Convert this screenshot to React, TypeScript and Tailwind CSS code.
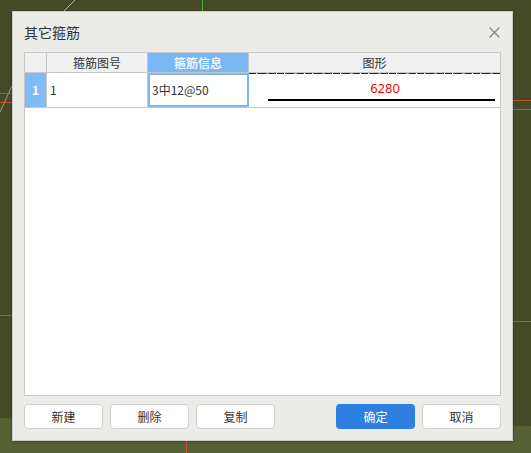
const CanvasBackdrop = () => (
    <svg className="absolute inset-0" width="531" height="453" viewBox="0 0 531 453">
        <rect x="0" y="0" width="531" height="453" fill="#444a28" />
        <polygon points="0,418 531,426 531,453 0,453" fill="#556033" />
        {/* cad lines behind the dialog */}
        <line x1="75" y1="0" x2="64" y2="11" stroke="#b9bcb0" strokeWidth="1" />
        <line x1="12" y1="86" x2="0" y2="112" stroke="#9a9e90" strokeWidth="1" />
        <line x1="202.5" y1="0" x2="202.5" y2="11" stroke="#3fae3a" strokeWidth="1" />
        <line x1="0" y1="93.5" x2="12" y2="93.5" stroke="#c0552a" strokeWidth="1" />
        <line x1="0" y1="102.5" x2="12" y2="102.5" stroke="#c0552a" strokeWidth="1" />
        <line x1="513" y1="100.5" x2="531" y2="100.5" stroke="#c0552a" strokeWidth="1" />
        <line x1="513" y1="109.5" x2="531" y2="109.5" stroke="#c0552a" strokeWidth="1" />
        <line x1="0" y1="315.5" x2="12" y2="315.5" stroke="#c0552a" strokeWidth="1" />
        <line x1="513" y1="321.5" x2="531" y2="321.5" stroke="#c0552a" strokeWidth="1" />
        <line x1="186.5" y1="441" x2="186.5" y2="453" stroke="#c0552a" strokeWidth="1" />
    </svg>
);

const CloseIcon = () => (
    <svg width="11" height="11" viewBox="0 0 11 11" className="mr-[1px]">
        <path d="M0.5 0.5 L10.5 10.5 M10.5 0.5 L0.5 10.5" stroke="#8a8a8a" strokeWidth="1.3" fill="none" />
    </svg>
);

const FooterButton = ({ label, primary }: { label: string; primary?: boolean }) => (
    <button
        className={
            primary
                ? "h-[25px] w-[79px] rounded-[4px] bg-[#2d7fe0] text-[12px] text-white"
                : "h-[25px] w-[79px] rounded-[4px] border border-[#cfcfcf] bg-white text-[12px] text-[#333]"
        }
    >
        {label}
    </button>
);

export default function App() {
    return (
        <div className="relative h-[453px] w-[531px] overflow-hidden font-['Noto_Sans_CJK_SC',sans-serif]">
            <CanvasBackdrop />

            {/* dialog window */}
            <div className="absolute left-[12px] top-[11px] flex h-[430px] w-[501px] flex-col border border-[#c9c9c6] bg-[#ebebe7] px-[11px] shadow-[0_1px_3px_rgba(0,0,0,0.25)]">
                <div className="flex h-[40px] items-center justify-between">
                    <span className="text-[14px] text-[#333]">其它箍筋</span>
                    <CloseIcon />
                </div>

                {/* grid */}
                <div className="flex h-[344px] flex-col border border-[#c8c8c8] bg-white">
                    <div className="flex h-[20px] border-b border-[#c8c8c8] bg-[#f0f0f0] text-[12px] leading-[19px] text-[#333]">
                        <div className="w-[22px] border-r border-[#c8c8c8]" />
                        <div className="w-[101px] border-r border-[#c8c8c8] text-center">箍筋图号</div>
                        <div className="w-[101px] border-r border-[#c8c8c8] bg-[#7ab8f5] text-center font-medium text-white">箍筋信息</div>
                        <div className="flex-1 text-center">图形</div>
                    </div>
                    <div className="flex h-[35px] border-b border-[#c8c8c8] text-[12px] text-[#333]">
                        <div className="flex w-[22px] items-center justify-center border-r border-[#c8c8c8] bg-[#80bbf6] font-bold text-white">1</div>
                        <div className="flex w-[101px] items-center border-r border-[#c8c8c8] pl-[3px]">1</div>
                        <div className="flex w-[101px] items-center border-2 border-[#7db5ec] pl-[2px]">3中12@50</div>
                        <div className="flex flex-1 flex-col">
                            <div className="h-px bg-[repeating-linear-gradient(90deg,#222_0_7px,#ffffff_7px_8px,#3a3a8a_8px_10px,#222_10px_17px,#c080a0_17px_20px,#222_20px_27px,#ffffff_27px_28px)]" />
                            <div className="mt-[7px] pl-[21px] text-center font-['Noto_Sans',sans-serif] text-[13px] leading-[14px] text-[#ff0000]">6280</div>
                            <div className="ml-[19px] mr-[5px] mt-[4px] h-[2px] bg-black" />
                        </div>
                    </div>
                </div>

                <div className="mt-[8px] flex justify-between">
                    <div className="flex gap-[7px]">
                        <FooterButton label="新建" />
                        <FooterButton label="删除" />
                        <FooterButton label="复制" />
                    </div>
                    <div className="flex gap-[7px]">
                        <FooterButton label="确定" primary />
                        <FooterButton label="取消" />
                    </div>
                </div>
            </div>
        </div>
    );
}
